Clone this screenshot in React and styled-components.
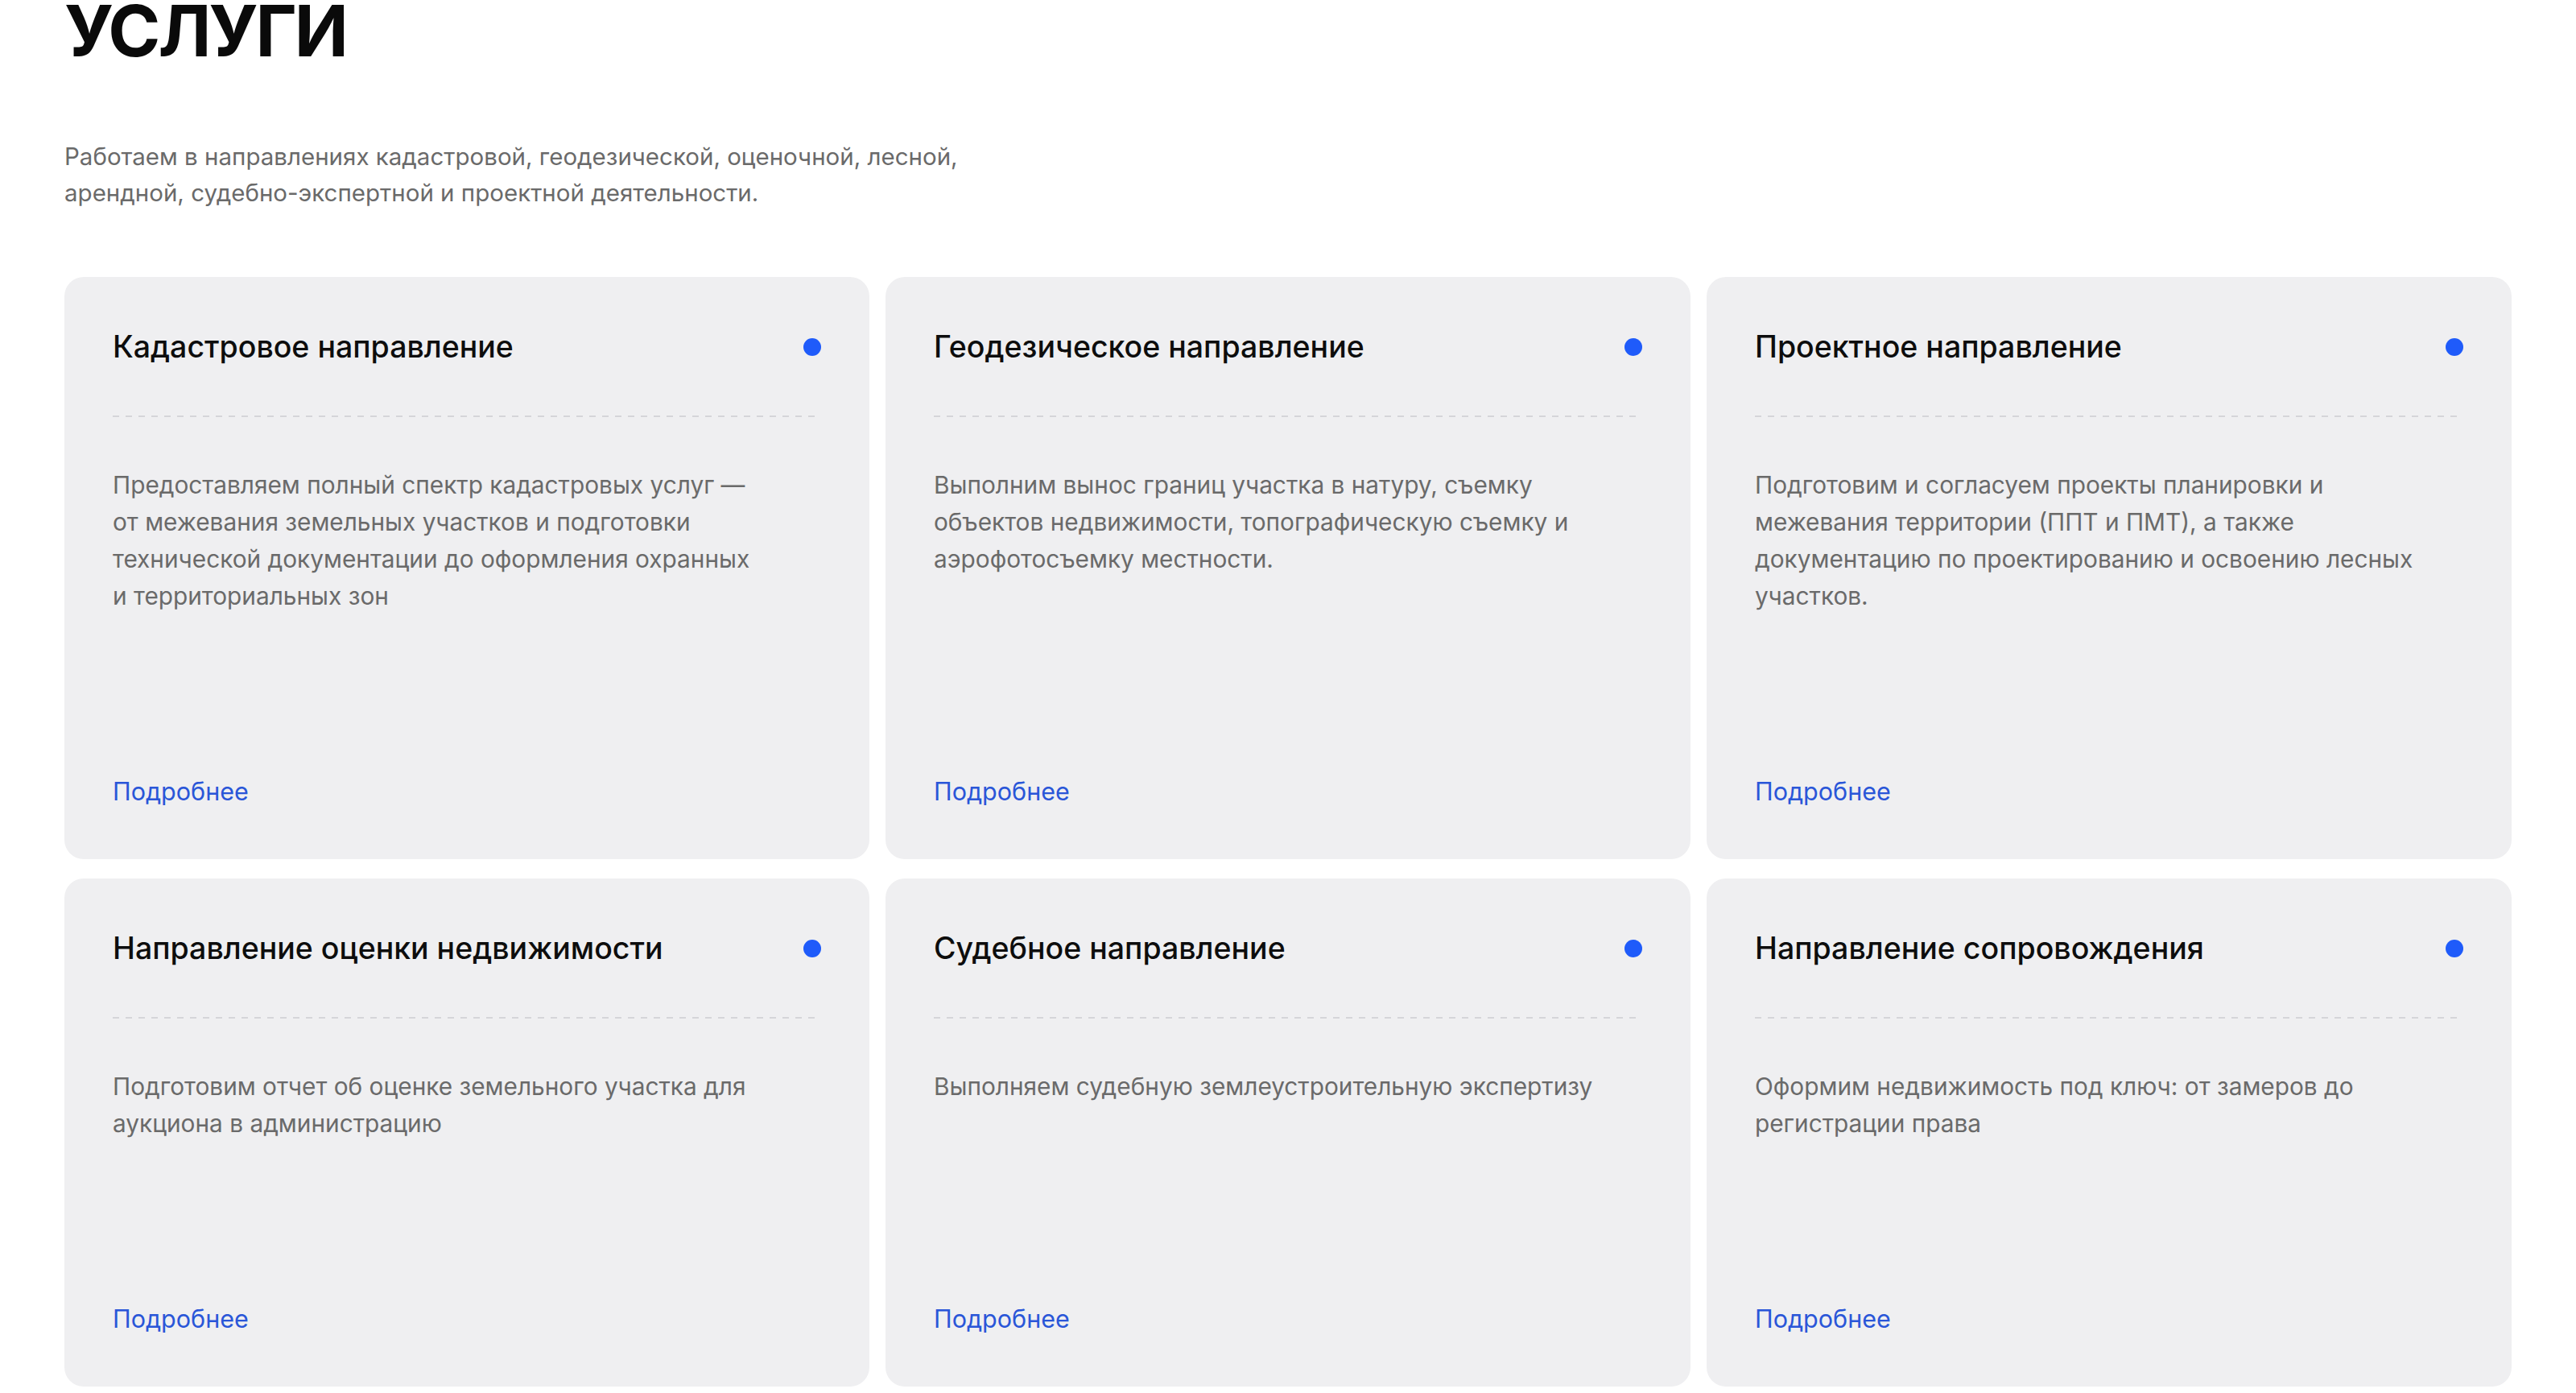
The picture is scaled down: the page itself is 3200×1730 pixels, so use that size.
import React from "react";
import styled, { createGlobalStyle } from "styled-components";

const GlobalStyle = createGlobalStyle`
  body {
    margin: 0;
    background: #ffffff;
    font-family: Inter, "Noto Sans", "Liberation Sans", sans-serif;
  }
`;

const Page = styled.section`
  padding: 0 80px 40px;
`;
const Heading = styled.h1`
  margin: -6px 0 0;
  font-size: 88px;
  line-height: 1;
  font-weight: 700;
  color: #0a0a0a;
  letter-spacing: -3px;
`;
const Lead = styled.p`
  margin: 90px 0 0;
  max-width: 1160px;
  font-size: 29.5px;
  line-height: 45px;
  color: #6a6a6a;
`;
const Grid = styled.div`
  display: grid;
  grid-template-columns: repeat(3, 1fr);
  column-gap: 20px;
  row-gap: 24px;
  margin-top: 82px;
`;
const Card = styled.article`
  display: flex;
  flex-direction: column;
  background: #efeff1;
  border-radius: 24px;
  padding: 63px 60px 64px;
`;
const CardHead = styled.div`
  display: flex;
  justify-content: space-between;
  align-items: center;
  height: 48px;
`;
const CardTitle = styled.h2`
  margin: 0;
  font-size: 37.5px;
  line-height: 48px;
  font-weight: 500;
  color: #0d0d0d;
`;
const Dot = styled.span`
  width: 22px;
  height: 22px;
  border-radius: 50%;
  background: #1f5bfa;
  flex-shrink: 0;
`;
const Dashed = styled.div`
  height: 2px;
  margin-top: 61px;
  margin-right: 8px;
  background: repeating-linear-gradient(
    to right,
    #d5d5d9 0 8px,
    transparent 8px 16px
  );
`;
const CardText = styled.p`
  margin: 61px 0 200px;
  max-width: 824px;
  font-size: 29.8px;
  line-height: 46px;
  color: #6a6a6a;
`;
const More = styled.a`
  margin-top: auto;
  font-size: 30.5px;
  line-height: 40px;
  color: #2a56d8;
  text-decoration: none;
  cursor: pointer;
`;

const services = [
  {
    title: "Кадастровое направление",
    text: "Предоставляем полный спектр кадастровых услуг — от межевания земельных участков и подготовки технической документации до оформления охранных и\u00A0территориальных зон",
  },
  {
    title: "Геодезическое направление",
    text: "Выполним вынос границ участка в натуру, съемку объектов недвижимости, топографическую съемку и аэрофотосъемку местности.",
  },
  {
    title: "Проектное направление",
    text: "Подготовим и согласуем проекты планировки и межевания территории (ППТ и ПМТ), а также документацию по проектированию и освоению лесных участков.",
  },
  {
    title: "Направление оценки недвижимости",
    text: "Подготовим отчет об оценке земельного участка для аукциона в администрацию",
  },
  {
    title: "Судебное направление",
    text: "Выполняем судебную землеустроительную экспертизу",
  },
  {
    title: "Направление сопровождения",
    text: "Оформим недвижимость под ключ: от замеров до регистрации права",
  },
];

const App = () => {
  return (
    <Page>
      <GlobalStyle />
      <Heading>УСЛУГИ</Heading>
      <Lead>
        Работаем в направлениях кадастровой, геодезической, оценочной, лесной,
        арендной, судебно-экспертной и проектной деятельности.
      </Lead>
      <Grid>
        {services.map((item) => (
          <Card key={item.title}>
            <CardHead>
              <CardTitle>{item.title}</CardTitle>
              <Dot />
            </CardHead>
            <Dashed />
            <CardText>{item.text}</CardText>
            <More>Подробнее</More>
          </Card>
        ))}
      </Grid>
    </Page>
  );
};

export default App;
